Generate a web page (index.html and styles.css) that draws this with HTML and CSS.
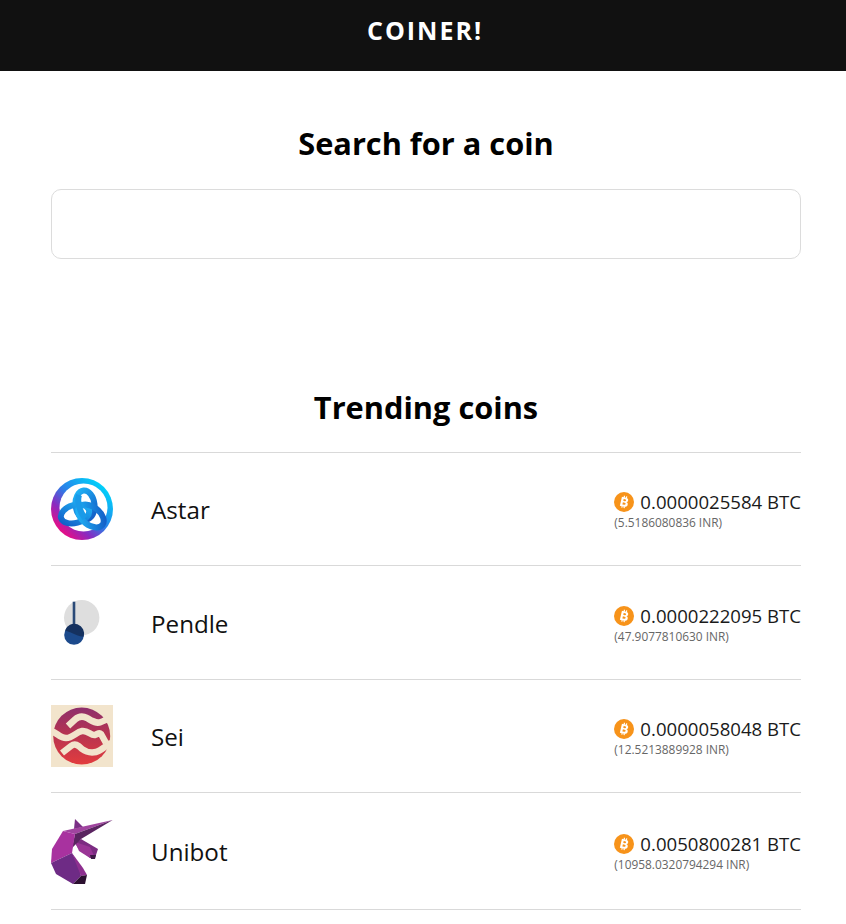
FILE: index.html
```html
<!DOCTYPE html>
<html lang="en">
<head>
<meta charset="utf-8">
<title>Coiner!</title>
<link rel="stylesheet" href="styles.css">
</head>
<body>
<svg class="sprite" width="0" height="0" aria-hidden="true">
  <symbol id="btc" viewBox="0 0 20 20">
    <circle cx="10" cy="10" r="10" fill="#f7931a"/>
    <g transform="rotate(13 10 10)">
      <path class="btc-b" d="M6.800 5.300h4.200c1.700 0 2.700.9 2.700 2.200 0 1-.6 1.700-1.400 2 1.100.2 1.900 1.100 1.900 2.300 0 1.700-1.200 2.700-3.100 2.700H6.800zM9 7.100v1.900h1.500c.7 0 1.100-.4 1.100-.95s-.4-.95-1.100-.95zm0 3.500v2.100h1.800c.8 0 1.200-.4 1.200-1.050s-.4-1.050-1.200-1.050zM8.500 3.800h1.200v1.600H8.500zm2.300 0H12v1.600h-1.200zM8.500 14.400h1.200V16H8.500zm2.300 0H12V16h-1.200z"/>
    </g>
  </symbol>
</svg>
<header class="topbar"><span class="brand">COINER!</span></header>
<main class="page">
  <section class="search">
    <h2 class="heading">Search for a coin</h2>
    <input class="search-input" type="text" aria-label="Search for a coin">
  </section>
  <section class="trending">
    <h2 class="heading">Trending coins</h2>
    <ul class="coins">
      <li class="coin">
        <svg class="logo" width="62" height="62" viewBox="0 0 62 62">
          <defs>
            <linearGradient id="astarRing" x1="0.8" y1="0.1" x2="0.1" y2="0.85">
              <stop offset="0" stop-color="#00d0fa"/><stop offset="0.45" stop-color="#2a7fe8"/><stop offset="0.72" stop-color="#8a2ac0"/><stop offset="0.95" stop-color="#e0108a"/>
            </linearGradient>
            <linearGradient id="astarKnot" x1="0.2" y1="0" x2="0.8" y2="1">
              <stop offset="0" stop-color="#1fb0f4"/><stop offset="1" stop-color="#1360c8"/>
            </linearGradient>
          </defs>
          <circle cx="31" cy="31" r="31" fill="url(#astarRing)"/>
          <circle cx="32.500" cy="29.500" r="24" fill="#fff"/>
          <g fill="none" stroke="url(#astarKnot)" stroke-width="6">
            <ellipse cx="34" cy="27" rx="9.500" ry="14.500" transform="rotate(-6 34 27)"/>
            <ellipse cx="24" cy="36" rx="9" ry="14.500" transform="rotate(74 24 36)"/>
            <ellipse cx="40" cy="38" rx="9" ry="14.500" transform="rotate(-52 40 38)"/>
          </g>
          <path d="M28 17C26 23 28 33 34 40" fill="none" stroke="#1a9ae8" stroke-width="6"/>
        </svg>
        <span class="name">Astar</span>
        <div class="price">
          <div class="btc"><svg class="btc-icon" width="20" height="20"><use href="#btc"/></svg><span>0.0000025584 BTC</span></div>
          <div class="inr">(5.5186080836 INR)</div>
        </div>
      </li>
      <li class="coin">
        <svg class="logo" width="62" height="63" viewBox="0 0 62 63">
          <circle cx="30.700" cy="26.700" r="17.700" fill="#dedede"/>
          <rect x="21.700" y="10.700" width="2.600" height="25" fill="#2a4a78"/>
          <circle cx="23" cy="44" r="9.800" fill="#1c4a8c"/>
          <path d="M14 39.500A9.800 9.800 0 0 1 32.600 45.800C28 45.500 25 44 22 42.500C19 41 16 40 14 39.500Z" fill="#15315f"/>
        </svg>
        <span class="name">Pendle</span>
        <div class="price">
          <div class="btc"><svg class="btc-icon" width="20" height="20"><use href="#btc"/></svg><span>0.0000222095 BTC</span></div>
          <div class="inr">(47.9077810630 INR)</div>
        </div>
      </li>
      <li class="coin">
        <svg class="logo" width="62" height="62" viewBox="0 0 62 62">
          <defs>
            <linearGradient id="seiFill" x1="0" y1="0" x2="0" y2="1">
              <stop offset="0" stop-color="#8e2f6c"/><stop offset="0.5" stop-color="#b9344f"/><stop offset="1" stop-color="#e23c3e"/>
            </linearGradient>
          </defs>
          <rect width="62" height="62" fill="#f2e4cc"/>
          <circle cx="30.700" cy="31" r="28.500" fill="url(#seiFill)"/>
          <g fill="none" stroke="#f2e4cc" stroke-width="6.500">
            <path d="M17 21L24 14.500C28 11 32 11 36 13C41 16 45 19 50 17C53 16 56 14 60 13"/>
            <path d="M0 26C5 27 9 33 15 33C22 33 25 27 31 26C37 25 40 31 44 30C47 29 48 27 50 29L55 38"/>
            <path d="M11 48L20 41C24 38 27 40 31 44C35 47 40 48 45 47C50 46 54 41 60 38"/>
          </g>
        </svg>
        <span class="name">Sei</span>
        <div class="price">
          <div class="btc"><svg class="btc-icon" width="20" height="20"><use href="#btc"/></svg><span>0.0000058048 BTC</span></div>
          <div class="inr">(12.5213889928 INR)</div>
        </div>
      </li>
      <li class="coin">
        <svg class="logo" width="62" height="66" viewBox="0 0 62 66">
          <polygon points="24,1 32,9 23,11" fill="#7a2f85"/>
          <polygon points="30,21 47,31 44,40 39,40 27,30 24,25" fill="#7c2c82"/>
          <polygon points="24,24 39,29 44,40 39,40 28,33" fill="#9a3596"/>
          <polygon points="39,37 45,37 44,41 40,41" fill="#3c1a44"/>
          <polygon points="61.700,2 12,13 24,16" fill="#a0449f"/>
          <polygon points="61.700,2 24,16 21,30 30,21" fill="#5a2460"/>
          <polygon points="12,13 24,16 21,35 0,45 1,31" fill="#a8329f"/>
          <polygon points="0,45 21,35 28,48 30,58 22,66 5,56" fill="#6e2b85"/>
          <polygon points="21,35 32,50 36,57 30,58 26,48" fill="#8d2f8f"/>
          <polygon points="22,66 30,58 36,57 34,66" fill="#2c1030"/>
        </svg>
        <span class="name">Unibot</span>
        <div class="price">
          <div class="btc"><svg class="btc-icon" width="20" height="20"><use href="#btc"/></svg><span>0.0050800281 BTC</span></div>
          <div class="inr">(10958.0320794294 INR)</div>
        </div>
      </li>
    </ul>
  </section>
</main>
</body>
</html>
```

FILE: styles.css
```css
* { box-sizing: border-box; }
html, body { margin: 0; padding: 0; }
body {
  background: #fff;
  color: #000;
  font-family: "Open Sans", "Noto Sans", sans-serif;
  overflow: hidden;
}
.sprite { display: block; height: 0; }
.topbar {
  height: 71px;
  background: #111;
  display: flex;
  align-items: center;
  justify-content: center;
  padding: 0 0 10px 4px;
}
.brand {
  color: #fff;
  font-size: 25px;
  font-weight: 700;
  letter-spacing: 2px;
  line-height: 1;
}
.page { padding: 0 45px 0 51px; }
.heading {
  margin: 0;
  text-align: center;
  font-size: 30.750px;
  font-weight: 700;
  line-height: 42px;
}
.search { padding-top: 51px; }
.search-input {
  display: block;
  width: 100%;
  height: 70px;
  margin-top: 25px;
  border: 1px solid #dcdcdc;
  border-radius: 10px;
  background: #fff;
  outline: none;
}
.trending { padding-top: 127px; }
.coins {
  list-style: none;
  margin: 24px 0 0;
  padding: 0;
  border-top: 1px solid #d9d9d9;
}
.coin {
  display: flex;
  align-items: center;
  padding: 25px 0;
  border-bottom: 1px solid #d9d9d9;
}
.logo { display: block; flex: none; }
.name {
  margin-left: 38px;
  padding-top: 2px;
  font-size: 24.200px;
  font-weight: 500;
  line-height: 32px;
  color: #111;
}
.price { margin-left: auto; padding-top: 2px; }
.btc {
  display: flex;
  align-items: center;
  gap: 6px;
  font-size: 18.600px;
  line-height: 24px;
  color: #1a1a1a;
}
.btc-icon { display: block; flex: none; }
.btc-b { fill: #fff; fill-rule: evenodd; }
.inr {
  font-size: 11.900px;
  line-height: 16px;
  color: #666;
}
```
